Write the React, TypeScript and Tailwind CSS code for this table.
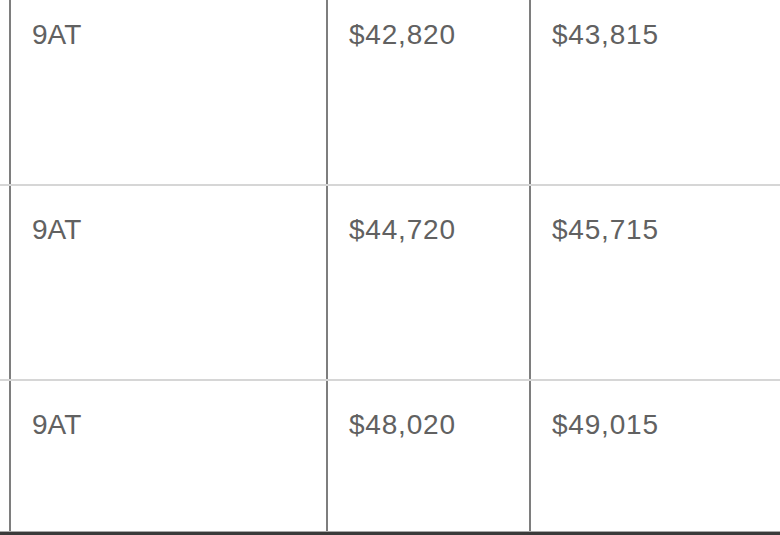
const rows = [
  { trans: "9AT", msrp: "$42,820", total: "$43,815", h: "h-[195px]", last: false },
  { trans: "9AT", msrp: "$44,720", total: "$45,715", h: "h-[195px]", last: false },
  { trans: "9AT", msrp: "$48,020", total: "$49,015", h: "h-[150px]", last: true },
];

export default function App() {
  return (
    <div className="w-[780px] h-[535px] overflow-hidden bg-white font-['Liberation_Sans',Arial,sans-serif] text-[28px] leading-[32px] text-[#616161]">
      <div className="-mt-[9px] flex flex-col">
        {rows.map((r, i) => (
          <div
            key={i}
            className={`${r.h} pl-[9px] grid grid-cols-[317px_203px_1fr] ${
              r.last ? "" : "border-b-2 border-[#d6d6d6]"
            }`}
          >
            <div className="border-l-2 border-[#7e7e7e] pl-[21px] pt-[28px]">{r.trans}</div>
            <div className="border-l-2 border-[#7e7e7e] pl-[21px] pt-[28px] tracking-[0.8px]">{r.msrp}</div>
            <div className="border-l-2 border-[#7e7e7e] pl-[21px] pt-[28px] tracking-[0.8px]">{r.total}</div>
          </div>
        ))}
        {/* bottom rule */}
        <div className="h-px bg-[#a8a8a8]" />
        <div className="h-[3px] bg-[#3a3a3a]" />
      </div>
    </div>
  );
}
